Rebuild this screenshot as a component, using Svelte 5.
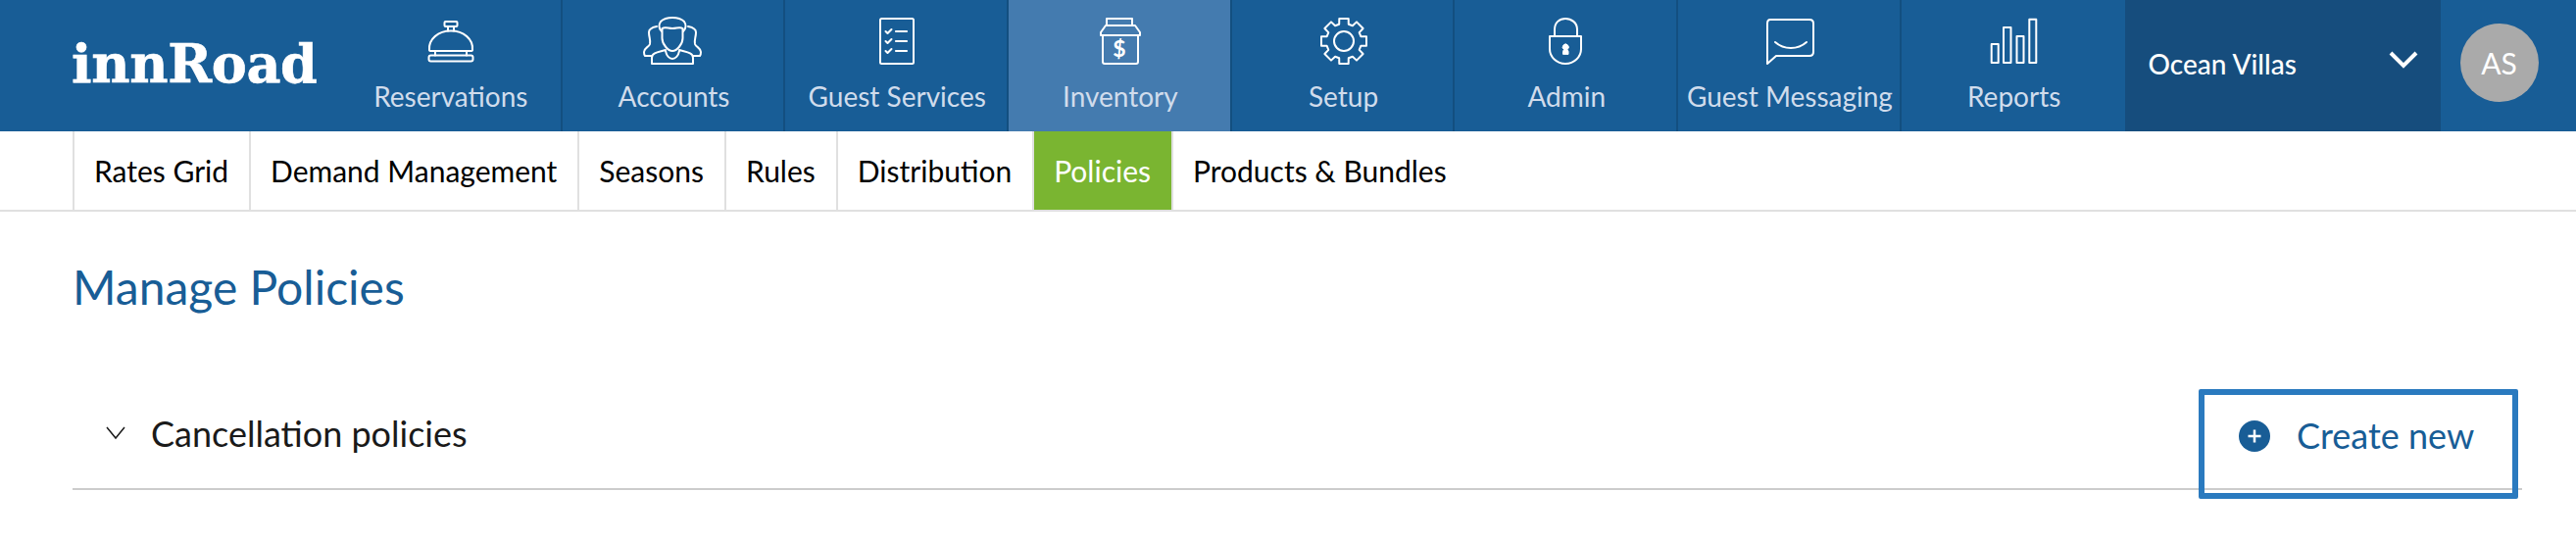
<script>
  const navItems = [
    { label: "Reservations", icon: "bell" },
    { label: "Accounts", icon: "people" },
    { label: "Guest Services", icon: "list" },
    { label: "Inventory", icon: "jar", active: true },
    { label: "Setup", icon: "gear" },
    { label: "Admin", icon: "lock" },
    { label: "Guest Messaging", icon: "chat" },
    { label: "Reports", icon: "bars" }
  ];
  const tabs = ["Rates Grid", "Demand Management", "Seasons", "Rules", "Distribution", "Policies", "Products & Bundles"];

  // gear outline with 8 teeth
  function gearPath() {
    const pts = [];
    const cx = 32, cy = 26, n = 8;
    for (let i = 0; i < n; i++) {
      const a = (i / n) * Math.PI * 2 - Math.PI / 2;
      const w = 0.2;
      const p = (r, t) => `${(cx + r * Math.cos(t)).toFixed(1)} ${(cy + r * Math.sin(t)).toFixed(1)}`;
      pts.push(`${i ? "L" : "M"}${p(18, a - w - 0.07)}`);
      pts.push(`L${p(23.5, a - w)}`);
      pts.push(`L${p(23.5, a + w)}`);
      pts.push(`L${p(18, a + w + 0.07)}`);
    }
    return pts.join(" ") + " Z";
  }
</script>

<header class="topbar">
  <div class="logo">innRoad</div>
  <nav class="main-nav">
    {#each navItems as item}
      <div class="nav-item" class:active={item.active}>
        <svg class="nav-icon" viewBox="0 0 64 52" width="64" height="52" fill="none" stroke="#fff" stroke-width="2" stroke-linejoin="round" stroke-linecap="round">
          {#if item.icon === "bell"}
            <rect x="25.500" y="6" width="13" height="5" rx="1" />
            <path d="M29 11v4.500M35 11v4.500" />
            <path d="M10 35C9 24 19 15.500 32 15.500s23 8.500 22 19.500c0 1-1 1-2 1H12c-1 0-2 0-2-1Z" />
            <path d="M16 36v4.500M48 36v4.500" />
            <rect x="9.500" y="40.500" width="45" height="6" rx="2" />
          {:else if item.icon === "people"}
            <g transform="translate(-1 0)">
              <path d="M20 16c-3-3-3-7-1-10 3-3 7-4 12-4s9 1 12 4c2 3 2 7-1 10" />
              <path d="M20.500 13c3-2 6 0 10.500 0s7.500-2 10.500 0v10c0 6-6 13-10.500 13s-10.500-7-10.500-13Z" />
              <path d="M15 11c-5 1-8 3-8 6 0 5 2 8 1 12-1 3-6 4-6 8 0 2 0 3 1 4h7" />
              <path d="M47 11c5 1 8 3 8 6 0 5-2 8-1 12 1 3 6 4 6 8 0 2 0 3-1 4h-7" />
              <path d="M24 35c-5 2-14 2-14 8v6h42v-6c0-6-9-6-14-8" />
              <path d="M24 36c1 5 4 8 7 8s6-3 7-8" />
            </g>
          {:else if item.icon === "list"}
            <rect x="15" y="3" width="34" height="46" rx="1.500" />
            <path d="M20.500 16l2 2 4-4M20.500 26l2 2 4-4M20.500 36l2 2 4-4" />
            <path d="M31 16h11M31 26h11M31 36h11" stroke-width="2.200" />
          {:else if item.icon === "jar"}
            <rect x="18" y="3" width="26" height="7" />
            <path d="M17 10l-5 7v3h40v-3l-5-7Z" />
            <path d="M14 20v27c0 1 .5 2 2 2h32c1.500 0 2-1 2-2V20" />
            <text x="31" y="42" text-anchor="middle" class="dollar" stroke="none" fill="#fff">$</text>
          {:else if item.icon === "gear"}
            <path d={gearPath()} />
            <circle cx="32" cy="26" r="10" />
          {:else if item.icon === "lock"}
            <path d="M20 21V14C20 7 25 3 31 3s12 4 12 11v7" />
            <path d="M15 21h32v13c0 8-7 15-16 15s-16-7-16-15Z" />
            <path d="M28.500 39v-2.500l1-2a3 3 0 1 1 3.500 0l1 2V39Z" fill="#fff" stroke-width="1" />
          {:else if item.icon === "chat"}
            <path d="M12 4h40c2.500 0 4 1.500 4 4v29c0 2.500-1.500 4-4 4H18l-9 8V8c0-2.500 1-4 3-4Z" />
            <path d="M17 27c9 8 23 8 32 0" />
          {:else if item.icon === "bars"}
            <rect x="8.700" y="29" width="7" height="19" />
            <rect x="21" y="12" width="7.500" height="36" />
            <rect x="34.500" y="21" width="7" height="27" />
            <rect x="47.300" y="3.700" width="7" height="44.300" />
          {/if}
        </svg>
        <span class="nav-label">{item.label}</span>
      </div>
    {/each}
  </nav>
  <div class="store">
    <span class="store-name">Ocean Villas</span>
    <svg class="store-caret" viewBox="0 0 30 18" width="30" height="18" fill="none" stroke="#fff" stroke-width="4"><path d="M2 2l13 13L28 2" /></svg>
  </div>
  <div class="avatar-wrap"><div class="avatar">AS</div></div>
</header>

<div class="subnav">
  {#each tabs as tab}
    <div class="tab" class:selected={tab === "Policies"}>{tab}</div>
  {/each}
</div>

<main class="content">
  <h1>Manage Policies</h1>
  <div class="accordion">
    <div class="acc-title">
      <svg viewBox="0 0 20 14" width="20" height="14" fill="none" stroke="#1a1a1a" stroke-width="1.500"><path d="M1 1l9 11L19 1" /></svg>
      <span>Cancellation policies</span>
    </div>
    <button class="create">
      <svg viewBox="0 0 32 32" width="32" height="32"><circle cx="16" cy="16" r="16" fill="#185d96" /><path d="M16 9.500v13M9.500 16h13" stroke="#fff" stroke-width="2.500" /></svg>
      <span class="create-label">Create new</span>
    </button>
  </div>
</main>

<style>
  :global(body) {
    margin: 0;
    background: #fff;
    font-family: Lato, "Open Sans", sans-serif;
  }

  .topbar {
    display: flex;
    height: 134px;
    background: #185d96;
  }
  .logo {
    padding: 35px 0 0 73px;
    width: 273px;
    font-family: "DejaVu Serif", serif;
    font-weight: 700;
    font-size: 54px;
    line-height: 60px;
    color: #fff;
    letter-spacing: -0.3px;
    -webkit-text-stroke: 0.6px #fff;
  }
  .main-nav {
    display: flex;
  }
  .nav-item {
    width: 227.7px;
    box-sizing: border-box;
    border-right: 2px solid #134f80;
    display: flex;
    flex-direction: column;
    align-items: center;
    padding: 16px 0 0 2px;
  }
  .nav-item:nth-child(8) {
    border-right: none;
  }
  .nav-item.active {
    background: #447baf;
  }
  .nav-label {
    margin-top: 13px;
    font-size: 28px;
    line-height: 34px;
    color: #d0dcec;
    white-space: nowrap;
  }
  .dollar {
    font-family: Lato, sans-serif;
    font-size: 23px;
    font-weight: 700;
  }
  .store {
    width: 322px;
    box-sizing: border-box;
    background: #164d7d;
    padding: 0 23px 0 24px;
    height: 134px;
    display: flex;
    justify-content: space-between;
    align-items: flex-start;
    color: #fff;
  }
  .store-name {
    font-size: 28px;
    line-height: 32px;
    margin-top: 49px;
    font-weight: 500;
  }
  .store-caret {
    margin-top: 52px;
  }
  .avatar-wrap {
    padding: 24px 0 0 20px;
  }
  .avatar {
    width: 80px;
    height: 80px;
    border-radius: 50%;
    background: #aaa;
    color: #fff;
    font-size: 30px;
    display: flex;
    align-items: center;
    justify-content: center;
  }

  .subnav {
    display: flex;
    height: 80px;
    padding-left: 74px;
    border-bottom: 2px solid #e0e0e0;
  }
  .tab {
    border-left: 2px solid #e0e0e0;
    padding: 0 21px 0 20px;
    font-size: 30px;
    line-height: 80px;
    color: #000;
    white-space: nowrap;
  }
  .tab:last-child {
    border-left: none;
  }
  .tab.selected {
    background: #7ab531;
    color: #fff;
    border-right: 2px solid #e0e0e0;
  }

  .content {
    padding: 0 55px 0 74px;
    min-height: 336px;
  }
  h1 {
    margin: 0;
    padding-top: 49px;
    font-size: 48px;
    line-height: 56px;
    font-weight: 400;
    color: #185d96;
  }
  .accordion {
    margin-top: 76px;
    display: flex;
    justify-content: space-between;
    align-items: flex-start;
    border-bottom: 2px solid #ccc;
  }
  .acc-title {
    display: flex;
    align-items: center;
    gap: 26px;
    height: 90px;
    padding-left: 34px;
    font-size: 36px;
    color: #1a1a1a;
  }
  /* button hangs over the row's bottom rule */
  .create {
    flex: none;
    width: 326px;
    height: 112px;
    margin: 0 4px -11px 0;
    box-sizing: border-box;
    border: 6px solid #2a7abf;
    border-radius: 2px;
    background: transparent;
    padding: 0 0 16px 35px;
    display: flex;
    align-items: center;
    gap: 27px;
    font: inherit;
    font-size: 36px;
    color: #185d96;
  }
  .create-label {
    margin-top: -3px;
  }
</style>
